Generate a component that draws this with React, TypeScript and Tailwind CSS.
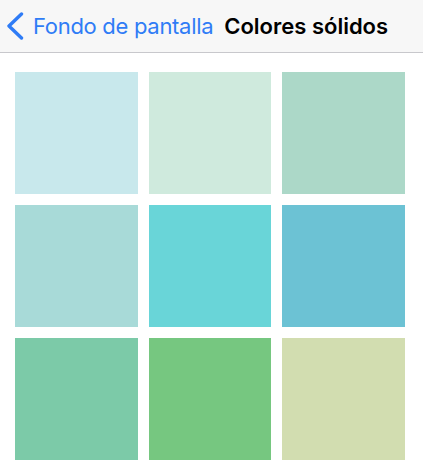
const colors = [
  '#c8e8ec',
  '#cfeadd',
  '#acd8c8',
  '#a8dad8',
  '#69d5d8',
  '#6cc2d4',
  '#7ccaa8',
  '#76c780',
  '#d2ddb0',
];

export default function App() {
  return (
    <div className="w-[423px] h-[469px] bg-white overflow-hidden" style={{ fontFamily: 'Inter, "Liberation Sans", sans-serif' }}>
      <div className="h-[53px] bg-[#f7f7f7] border-b border-[#c8c8cc] flex items-center">
        <svg width="20" height="28" viewBox="0 0 20 28" className="ml-[5px] mt-[-1px]">
          <path d="M16.5 2 L4 14 L16.5 26" fill="none" stroke="#2f7cf6" strokeWidth="3.4" strokeLinecap="round" strokeLinejoin="round" />
        </svg>
        <span className="ml-[8px] text-[22px] text-[#2f7cf6] tracking-[-0.3px]">Fondo de pantalla</span>
        <span className="ml-[11px] text-[22px] font-semibold text-black tracking-[0px]">Colores sólidos</span>
      </div>
      <div className="pt-[19px] pl-[15px]">
        <div className="w-[390px] grid grid-cols-3 gap-[11px]">
          {colors.map((c) => (
            <div key={c} className="h-[122px]" style={{ backgroundColor: c }} />
          ))}
        </div>
      </div>
    </div>
  );
}
